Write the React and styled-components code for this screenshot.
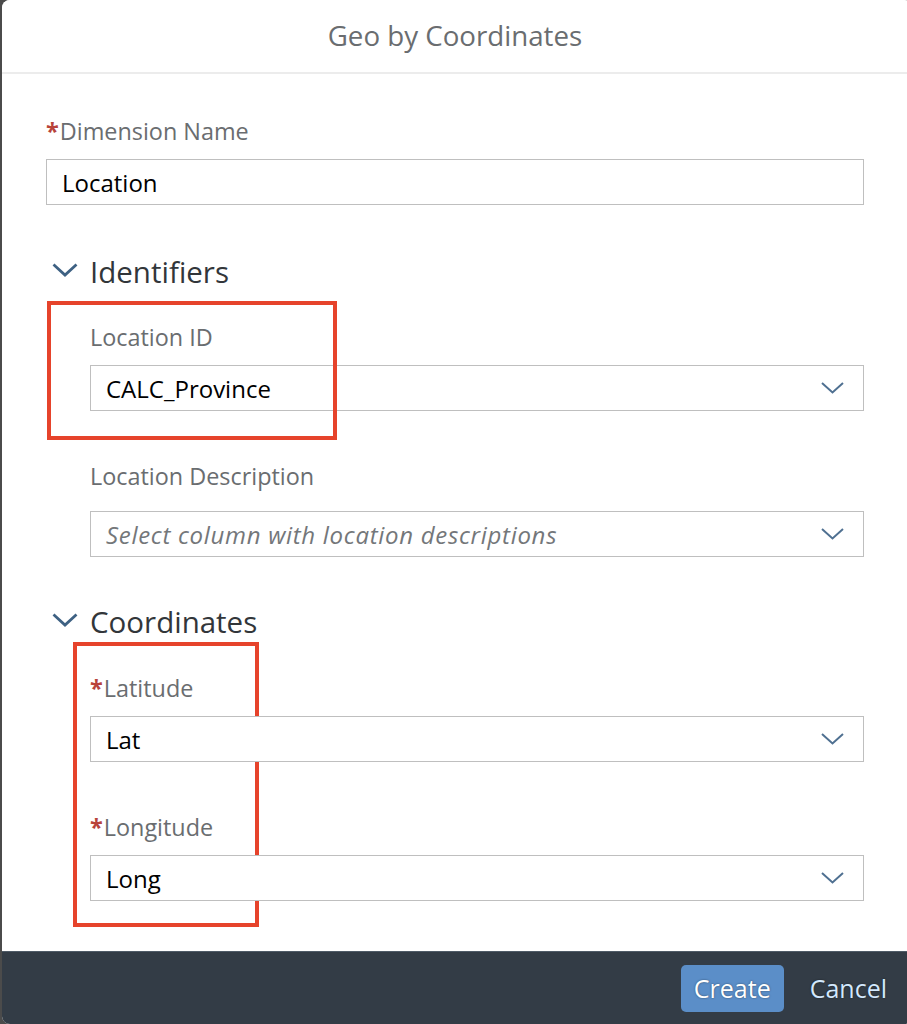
import React from "react";
import styled, { createGlobalStyle } from "styled-components";

const Global = createGlobalStyle`
  html, body {
    margin: 0;
    padding: 0;
    background: #4b4b4b;
    overflow: hidden;
  }
  * { box-sizing: border-box; }
`;

const Stage = styled.div`
  width: 907px;
  height: 1024px;
  overflow: hidden;
  background: #4b4b4b;
`;

const Dialog = styled.div`
  margin-left: 2px;
  width: 910px;
  height: 1024px;
  border-radius: 8px;
  overflow: hidden;
  display: flex;
  flex-direction: column;
  background: #ffffff;
  font-family: "Open Sans", "Noto Sans", sans-serif;
`;

const Header = styled.header`
  height: 74px;
  flex: none;
  display: flex;
  align-items: center;
  justify-content: center;
  padding-bottom: 3px;
  border-bottom: 2px solid #ececec;
  background: #ffffff;
`;

const Title = styled.h1`
  margin: 0 0 0 -4px;
  font-size: 27.7px;
  font-weight: 400;
  color: #6a6d70;
  line-height: 36px;
`;

const Content = styled.main`
  flex: 1;
  padding: 43px 48px 0 44px;
  background: #ffffff;
`;

const Field = styled.div`
  position: relative;
  margin-top: ${(p) => p.$top || 0}px;
`;

const Label = styled.label`
  display: block;
  height: 28px;
  line-height: 28px;
  margin-bottom: ${(p) => p.$gap ?? 14}px;
  font-size: 23.4px;
  color: #6a6d70;
  white-space: nowrap;
`;

const Required = styled.span`
  color: #b8433b;
  font-weight: 700;
  margin-right: 1px;
`;

const InputBox = styled.div`
  height: 46px;
  border: 1px solid #bfbfbf;
  background: #ffffff;
  display: flex;
  align-items: center;
  padding: 0 19px 0 15px;
  font-size: 24px;
  color: #000000;
`;

const Value = styled.span`
  flex: 1;
  white-space: nowrap;
  color: ${(p) => (p.$placeholder ? "#74777a" : "#000000")};
  font-style: ${(p) => (p.$placeholder ? "italic" : "normal")};
  font-size: 24px;
  letter-spacing: ${(p) => (p.$placeholder ? "0.7px" : "0")};
`;

const Section = styled.section`
  margin-top: ${(p) => p.$top}px;
`;

const SectionHeader = styled.div`
  height: 36px;
  display: flex;
  align-items: center;
  margin-left: 6px;
`;

const HeadChevron = styled.svg`
  width: 26px;
  height: 14px;
  margin-top: -4px;
  margin-right: 12px;
  flex: none;
`;

const SectionTitle = styled.h2`
  margin: 0;
  font-size: 29.5px;
  font-weight: 400;
  line-height: 36px;
  color: #32363a;
`;

const Fields = styled.div`
  margin-left: 44px;
`;

const Group = styled.div`
  position: relative;
  margin-top: ${(p) => p.$top || 0}px;
`;

const Annotation = styled.div`
  position: absolute;
  left: ${(p) => p.$left}px;
  top: ${(p) => p.$top}px;
  width: ${(p) => p.$w}px;
  height: ${(p) => p.$h}px;
  border: 4px solid #e6432b;
  pointer-events: none;
`;

const SelectChevron = styled.svg`
  width: 23px;
  height: 12px;
  flex: none;
`;

const Footer = styled.footer`
  height: 73px;
  flex: none;
  background: #333c46;
  border-top: 1px solid #4f5b67;
  display: flex;
  align-items: center;
  justify-content: flex-end;
  gap: 14px;
  padding-right: 13px;
`;

const Button = styled.button`
  font-family: "Open Sans", "Noto Sans", sans-serif;
  font-size: 25px;
  height: 47px;
  padding: 0 ${(p) => (p.$primary ? 13 : 12)}px;
  border-radius: 5px;
  border: none;
  cursor: pointer;
  background: ${(p) => (p.$primary ? "#5b8ec8" : "transparent")};
  color: ${(p) => (p.$primary ? "#ffffff" : "#d3e8fd")};
  text-shadow: 0 0 2px rgba(0, 0, 0, 0.5);
`;

const Chevron = () => (
  <HeadChevron viewBox="0 0 26 14">
    <path d="M1.5 1.5 L13 12 L24.5 1.5" fill="none" stroke="#3e6183" strokeWidth="2.8" />
  </HeadChevron>
);

const DownArrow = () => (
  <SelectChevron viewBox="0 0 23 12">
    <path d="M1 1 L11.5 10.5 L22 1" fill="none" stroke="#4f7091" strokeWidth="2" />
  </SelectChevron>
);

const SelectField = ({ label, value, placeholder, required, top, labelGap, children }) => (
  <Field $top={top}>
    <Label $gap={labelGap}>
      {required && <Required>*</Required>}
      {label}
    </Label>
    <InputBox>
      <Value $placeholder={!!placeholder}>{value || placeholder}</Value>
      <DownArrow />
    </InputBox>
    {children}
  </Field>
);

export default function App() {
  return (
    <Stage>
      <Global />
      <Dialog>
        <Header>
          <Title>Geo by Coordinates</Title>
        </Header>
        <Content>
          <Field>
            <Label>
              <Required>*</Required>Dimension Name
            </Label>
            <InputBox>
              <Value>Location</Value>
            </InputBox>
          </Field>

          <Section $top={49}>
            <SectionHeader>
              <Chevron />
              <SectionTitle>Identifiers</SectionTitle>
            </SectionHeader>
            <Fields>
              <SelectField label="Location ID" value="CALC_Province" top={33}>
                <Annotation $left={-43} $top={-22} $w={290} $h={139} />
              </SelectField>
              <SelectField
                label="Location Description"
                placeholder="Select column with location descriptions"
                top={51}
                labelGap={21}
              />
            </Fields>
          </Section>

          <Section $top={47}>
            <SectionHeader>
              <Chevron />
              <SectionTitle>Coordinates</SectionTitle>
            </SectionHeader>
            <Fields>
              <Group $top={34}>
                <Annotation $left={-17} $top={-32} $w={186} $h={285} />
                <SelectField label="Latitude" value="Lat" required />
                <SelectField label="Longitude" value="Long" required top={51} />
              </Group>
            </Fields>
          </Section>
        </Content>
        <Footer>
          <Button $primary>Create</Button>
          <Button>Cancel</Button>
        </Footer>
      </Dialog>
    </Stage>
  );
}
